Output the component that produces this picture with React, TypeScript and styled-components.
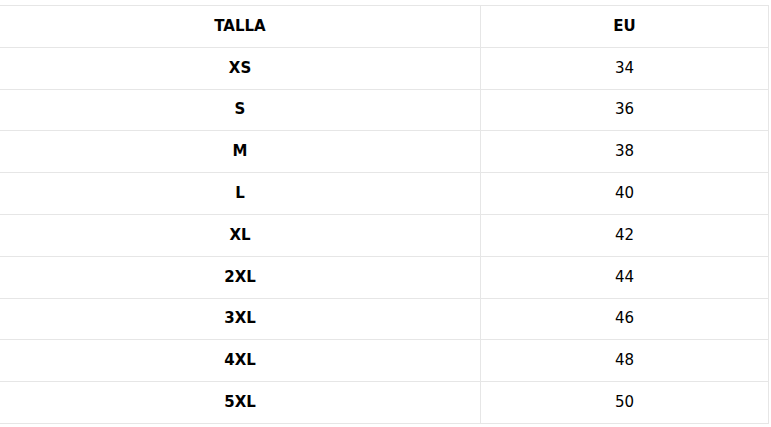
import styled, { createGlobalStyle } from 'styled-components'

const GlobalStyle = createGlobalStyle`
  html, body {
    margin: 0;
    padding: 0;
    background: #fff;
  }
  body {
    font-family: "DejaVu Sans", "Open Sans", sans-serif;
    color: #000;
  }
`

const Wrap = styled.div`
  padding-top: 5px;
`

const SizeTable = styled.table`
  width: 769px;
  border-collapse: collapse;
  table-layout: fixed;
`

const Row = styled.tr`
  height: 41.8px;
`

const Cell = styled.td<{ $bold?: boolean; $first?: boolean }>`
  width: ${({ $first }) => ($first ? '480px' : 'auto')};
  padding: 0 0 1px;
  text-align: center;
  vertical-align: middle;
  border: 1px solid #e6e6e6;
  border-left: ${({ $first }) => ($first ? 'none' : '1px solid #e6e6e6')};
  font-size: 15px;
  font-weight: ${({ $bold }) => ($bold ? 700 : 400)};
  color: #000;
`

const rows = [
  ['XS', '34'],
  ['S', '36'],
  ['M', '38'],
  ['L', '40'],
  ['XL', '42'],
  ['2XL', '44'],
  ['3XL', '46'],
  ['4XL', '48'],
  ['5XL', '50'],
]

export default function App() {
  return (
    <Wrap>
      <GlobalStyle />
      <SizeTable>
        <thead>
          <Row>
            <Cell as="th" $first $bold>
              TALLA
            </Cell>
            <Cell as="th" $bold>
              EU
            </Cell>
          </Row>
        </thead>
        <tbody>
          {rows.map(([size, eu]) => (
            <Row key={size}>
              <Cell $first $bold>
                {size}
              </Cell>
              <Cell>{eu}</Cell>
            </Row>
          ))}
        </tbody>
      </SizeTable>
    </Wrap>
  )
}
